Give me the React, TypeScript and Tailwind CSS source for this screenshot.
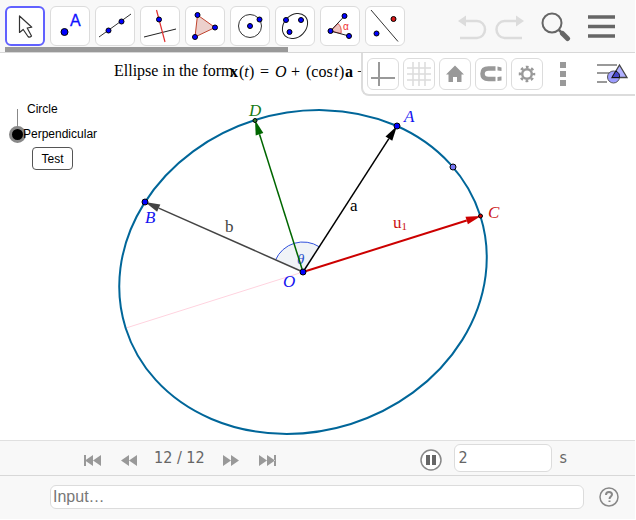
import { useState, type ReactNode } from "react";

const BLUE = "#0000ff";
const serif = "font-['Liberation_Serif',serif]";
const barText = "font-['DejaVu_Sans_Condensed','DejaVu_Sans',sans-serif] text-base text-[#666666]";

function Dot({ x, y, r = 3, fill = BLUE }: { x: number; y: number; r?: number; fill?: string }) {
  return <circle cx={x} cy={y} r={r - 0.5} fill={fill} stroke="#000" strokeWidth="1" />;
}

const tools: { name: string; icon: ReactNode }[] = [
  {
    name: "Move",
    icon: (
      <path
        d="M14.500 10v16.500l3.700-3 4.800 7q1.500 1.500 3.500-.5l-4.300-8 4.600-.8z"
        fill="#fff"
        stroke="#333"
        strokeWidth="1.2"
        strokeLinejoin="round"
      />
    ),
  },
  {
    name: "Point",
    icon: (
      <>
        <Dot x={14.5} y={26} r={4} />
        <text x="20" y="20" fontSize="16" fill="#1010ff" stroke="#1010ff" strokeWidth=".3">A</text>
      </>
    ),
  },
  {
    name: "Line",
    icon: (
      <>
        <path d="M4 31 36 8" stroke="#333" />
        <Dot x={13.5} y={24.5} />
        <Dot x={26.5} y={15.5} />
      </>
    ),
  },
  {
    name: "Perpendicular Line",
    icon: (
      <>
        <path d="m4 31 32-8" stroke="#222" />
        <path d="m16.500 4 8.500 32" stroke="#e03030" strokeWidth="1.2" />
        <Dot x={19} y={13.5} />
      </>
    ),
  },
  {
    name: "Polygon",
    icon: (
      <>
        <path d="M12.500 9 30 21.500 10 31z" fill="#ecd0cc" stroke="#c0442e" />
        <Dot x={12.5} y={9} />
        <Dot x={30} y={21.5} />
        <Dot x={10} y={31} />
      </>
    ),
  },
  {
    name: "Circle with Center",
    icon: (
      <>
        <circle cx="20" cy="20" r="11.5" fill="none" stroke="#333" />
        <Dot x={20} y={20} />
        <Dot x={29.5} y={13.5} />
      </>
    ),
  },
  {
    name: "Ellipse",
    icon: (
      <>
        <ellipse cx="20" cy="20" rx="14" ry="11" transform="rotate(-45 20 20)" fill="none" stroke="#222" />
        <Dot x={11} y={14} />
        <Dot x={26} y={14} />
        <Dot x={14.5} y={26} />
      </>
    ),
  },
  {
    name: "Angle",
    icon: (
      <>
        <path d="M10.500 25 18 17.500Q22 21 21 27.500z" fill="#efc4c0" stroke="#e05050" />
        <path d="M24.500 10 10.500 25 29 30" fill="none" stroke="#222" />
        <text x="23" y="24" fontSize="10" fill="#f03030">α</text>
        <Dot x={24.5} y={10} />
        <Dot x={10.5} y={25} />
        <Dot x={29} y={30} />
      </>
    ),
  },
  {
    name: "Reflect about Line",
    icon: (
      <>
        <path d="m6 4 27 31.500" stroke="#333" />
        <Dot x={28.5} y={13} fill="#d81818" />
        <Dot x={11.5} y={27.5} />
      </>
    ),
  },
];

const viewOptions: { name: string; icon: ReactNode }[] = [
  { name: "Show axes", icon: <path d="M12 4v24M4 20h24" stroke="#999" strokeWidth="2" /> },
  {
    name: "Show grid",
    icon: <path d="M10 4v24M16 4v24M22 4v24M4 10h24M4 16h24M4 22h24" stroke="#dcdcdc" strokeWidth="1.5" />,
  },
  { name: "Standard view", icon: <path d="M16 7.500 25 16.500h-2.500v7.500h-4.500v-5h-4v5h-4.500v-7.500h-2.500z" fill="#999" /> },
  {
    name: "Snap to grid",
    icon: (
      <>
        <path d="M20.500 10.500h-7q-6 0-6 5.200t6 5.200h7" fill="none" stroke="#999" strokeWidth="4.500" />
        <path d="m22.500 8.500 4 1v3.500l-4-.5zM22.500 19l4-.5v4l-4 .5z" fill="#999" />
      </>
    ),
  },
  {
    name: "Settings",
    icon: (
      <g fill="none" stroke="#999">
        <circle cx="16" cy="16" r="4.800" strokeWidth="2.500" />
        <circle cx="16" cy="16" r="7" strokeWidth="2.500" strokeDasharray="2.750 2.748" strokeDashoffset="1.375" />
      </g>
    ),
  },
];

function Toolbar() {
  const [active, setActive] = useState("Move");
  return (
    <header className="flex h-[53px] items-start justify-between border-b border-[#d8d8d8] bg-[#f8f8f8] pl-[5px]">
      <div className="pt-1.5">
        <div className="flex gap-[5px]">
          {tools.map((t) => (
            <button
              key={t.name}
              aria-label={t.name}
              onClick={() => setActive(t.name)}
              className={`flex size-10 items-center justify-center rounded-md bg-white ${
                active === t.name ? "border-2 border-[#6161ff]" : "border border-[#dcdcdc]"
              }`}
            >
              <svg viewBox="0 0 40 40" className="size-10 shrink-0 font-['Liberation_Sans',sans-serif]">{t.icon}</svg>
            </button>
          ))}
        </div>
        <div className="mt-px h-[5px] w-[283px] bg-[#999999]" />
      </div>
      <div className="flex items-center gap-2 pt-3 pr-[18px]">
        <button aria-label="Undo">
          <svg viewBox="0 0 30 30" className="size-[30px]">
            <path d="M8 9h12a8 8.500 0 0 1 0 17H3" fill="none" stroke="#dcdcdc" strokeWidth="2.500" />
            <path d="M1 9 9 3.500v11z" fill="#dcdcdc" />
          </svg>
        </button>
        <button aria-label="Redo">
          <svg viewBox="0 0 30 30" className="size-[30px]">
            <path d="M21 9H9.500a8 8.500 0 0 0 0 17H27" fill="none" stroke="#dcdcdc" strokeWidth="2.500" />
            <path d="M29 9 21 3.500v11z" fill="#dcdcdc" />
          </svg>
        </button>
        <button aria-label="Search" className="ml-2">
          <svg viewBox="0 0 30 30" className="size-[30px]">
            <circle cx="11" cy="11" r="9.500" fill="none" stroke="#666" strokeWidth="2" />
            <path d="m17.500 17.500 4 4" stroke="#666" strokeWidth="2.500" />
            <path d="m21.500 21.500 5 5" stroke="#666" strokeWidth="5" strokeLinecap="round" />
          </svg>
        </button>
        <button aria-label="Menu" className="ml-2">
          <svg viewBox="0 0 30 30" className="size-[30px]">
            <path d="M1 5h27M1 14.500h27M1 24h27" stroke="#666" strokeWidth="3.500" />
          </svg>
        </button>
      </div>
    </header>
  );
}

function StyleBar() {
  return (
    <div className="absolute top-0 right-0 flex h-[43px] w-[274px] items-center rounded-bl-lg border-b-2 border-l-2 border-[#dcdcdc] bg-white pl-1">
      <div className="flex gap-1">
        {viewOptions.map((o) => (
          <button
            key={o.name}
            aria-label={o.name}
            className="flex size-8 items-center justify-center rounded-md border border-[#dcdcdc] bg-white"
          >
            <svg viewBox="0 0 32 32" className="size-8 shrink-0">{o.icon}</svg>
          </button>
        ))}
      </div>
      <button aria-label="More" className="ml-4">
        <svg viewBox="0 0 8 26" className="h-[26px] w-2">
          <path d="M1 1h6v6H1zM1 10h6v6H1zM1 19h6v6H1z" fill="#999" />
        </svg>
      </button>
      <button aria-label="Graphics style" className="ml-[29px]">
        <svg viewBox="0 0 32 26" className="h-[26px] w-8">
          <path d="M1 4h20M1 12h13M1 21h10" stroke="#999" strokeWidth="2" />
          <circle cx="17.500" cy="16" r="6" fill="#9c9cff" stroke="#555" />
          <path d="M23.500 4 31 16.500H16z" fill="#9c9cff" fillOpacity=".8" stroke="#444" strokeWidth="1.300" />
          <path d="M20 9.800 16 16.500h7.500a6 6 0 0 0-3.500-6.300z" fill="#4646c8" stroke="#111" />
        </svg>
      </button>
    </div>
  );
}

function Vector({ x, y, color, width = 1.5 }: { x: number; y: number; color: string; width?: number }) {
  const ox = 303;
  const oy = 272;
  const len = Math.hypot(x - ox, y - oy);
  const ux = (x - ox) / len;
  const uy = (y - oy) / len;
  const bx = x - ux * 15;
  const by = y - uy * 15;
  return (
    <>
      <path d={`M${ox} ${oy}L${bx} ${by}`} stroke={color} strokeWidth={width} />
      <path d={`M${x} ${y}L${bx - uy * 4} ${by + ux * 4}L${bx + uy * 4} ${by - ux * 4}z`} fill={color} />
    </>
  );
}

function Construction() {
  return (
    <svg viewBox="0 53 636 387" className={`block h-[387px] w-[636px] ${serif}`} fontSize="17">
      <path d="M303 272 126 328" stroke="#ffd3df" />
      <path d="M303 272 275.500 260A30 30 0 0 1 319.300 246.800z" fill="#f0f3f7" />
      <path d="M275.500 260A30 30 0 0 1 319.300 246.800" fill="none" stroke="#3050dd" />
      <text x="297" y="264" fontStyle="italic" fontSize="15" fill="#2a52cc">θ</text>
      <ellipse
        cx="303"
        cy="272"
        rx="186"
        ry="159.300"
        transform="rotate(-17.500 303 272)"
        fill="none"
        stroke="#006699"
        strokeWidth="2"
      />
      <Vector x={145} y={202} color="#444444" />
      <Vector x={255} y={120} color="#006600" />
      <Vector x={397} y={126} color="#000000" />
      <Vector x={481} y={216} color="#cc0000" width={2} />
      <Dot x={303} y={272} r={3.5} />
      <Dot x={145} y={202} r={3.5} />
      <Dot x={397} y={126} r={3.5} />
      <Dot x={453} y={167} r={3.5} fill="#7777f4" />
      <Dot x={255} y={120.5} r={2.5} fill="#2c7a2c" />
      <Dot x={480.5} y={216} r={2.5} fill="#cc0000" />
      <g fontStyle="italic" fill="#1414f0">
        <text x="404" y="122">A</text>
        <text x="145" y="223">B</text>
        <text x="283" y="287">O</text>
        <text x="249" y="116" fill="#167a16">D</text>
        <text x="488" y="218" fill="#cc1414">C</text>
      </g>
      <text x="350" y="211">a</text>
      <text x="225" y="232" fill="#444">b</text>
      <text x="393" y="228" fill="#cc1414">
        u<tspan dy="2" fontSize="11">1</tspan>
      </text>
      <text x="114" y="76" fontSize="16">Ellipse in the form</text>
      <g fontSize="16">
        <text x="230" y="77" fontWeight="bold">x</text>
        <text x="239" y="77">(<tspan fontStyle="italic">t</tspan></text>
        <text x="249" y="77">)</text>
        <text x="260" y="77">=</text>
        <text x="275" y="77" fontStyle="italic">O</text>
        <text x="291" y="77">+</text>
        <text x="306" y="77">(cos</text>
        <text x="334" y="77" fontStyle="italic">t</text>
        <text x="339" y="77">)</text>
        <text x="345" y="77" fontWeight="bold">a</text>
        <text x="357" y="77">−</text>
      </g>
    </svg>
  );
}

function ModeSlider() {
  const [value, setValue] = useState(1);
  return (
    <div className="font-['Liberation_Sans',sans-serif] text-xs leading-4 text-black">
      <div className="absolute top-14 left-[17px] h-[25px] w-px bg-[#888888]" />
      <span className="absolute top-12 left-[27px]">Circle</span>
      <input
        id="mode"
        type="range"
        min={0}
        max={1}
        step={1}
        value={value}
        onChange={(e) => setValue(Number(e.target.value))}
        className="absolute top-[47px] left-[9px] h-[43px] w-[17px] appearance-none bg-transparent [writing-mode:vertical-lr] [&::-webkit-slider-thumb]:size-[17px] [&::-webkit-slider-thumb]:appearance-none [&::-webkit-slider-thumb]:rounded-full [&::-webkit-slider-thumb]:border-3 [&::-webkit-slider-thumb]:border-[#888888] [&::-webkit-slider-thumb]:bg-black"
      />
      <label htmlFor="mode" className="absolute top-[73px] left-[23px]">Perpendicular</label>
      <button className="absolute top-[94px] left-8 h-[23px] w-[41px] rounded-sm border border-[#555555] bg-white">
        Test
      </button>
    </div>
  );
}

const back = "M9 0v11L1 5.500zM17 0v11L9 5.500z";
const forward = "M1 0v11l8-5.500zM9 0v11l8-5.500z";

function StepButton({ name, d, className = "" }: { name: string; d: string; className?: string }) {
  return (
    <button aria-label={name} className={className}>
      <svg viewBox="0 0 18 11" className="mt-1 h-[11px] w-[18px]">
        <path d={d} fill="#999" />
      </svg>
    </button>
  );
}

function NavigationBar() {
  const [seconds, setSeconds] = useState("2");
  return (
    <nav className={`flex h-[35px] items-center border-t border-[#e0e0e0] bg-[#f8f8f8] pr-17 pl-21 ${barText}`}>
      <StepButton name="First step" d={`M0 0h2v11H0z${back}`} />
      <StepButton name="Previous step" d={back} className="ml-[18px]" />
      <span className="ml-4 w-[52px] whitespace-nowrap">12 / 12</span>
      <StepButton name="Next step" d={forward} className="ml-4" />
      <StepButton name="Last step" d={`M16 0h2v11h-2z${forward}`} className="ml-[18px]" />
      <button aria-label="Pause" className="mt-1 ml-auto">
        <svg viewBox="0 0 22 22" className="size-[22px]">
          <circle cx="11" cy="11" r="10" fill="#fff" stroke="#888" strokeWidth="1.500" />
          <path d="M6 6h4v10H6zM12 6h4v10h-4z" fill="#666" />
        </svg>
      </button>
      <input
        id="seconds"
        value={seconds}
        onChange={(e) => setSeconds(e.target.value)}
        className="ml-3 h-7 w-[98px] rounded-md border border-[#dcdcdc] bg-white pr-1 pb-0.5 pl-1 outline-none"
      />
      <label htmlFor="seconds" className="ml-2">s</label>
    </nav>
  );
}

function InputBar() {
  return (
    <footer className="flex h-11 items-center border-t border-[#d8d8d8] bg-[#f8f8f8] pr-4 pb-px pl-[50px]">
      <input
        aria-label="Input"
        placeholder="Input…"
        className="h-6 min-w-0 flex-1 rounded-md border border-[#dcdcdc] bg-white px-0.5 font-['Liberation_Sans',sans-serif] text-base outline-none placeholder:text-[#777777]"
      />
      <button aria-label="Help" className="ml-[15px]">
        <svg viewBox="0 0 20 20" className="size-5">
          <circle cx="10" cy="10" r="9" fill="none" stroke="#888" strokeWidth="1.500" />
          <path d="M7 8q0-3 3-3t3 2.500c0 2-2.500 2-2.500 4.500M10.500 13.500V15" fill="none" stroke="#888" strokeWidth="2" />
        </svg>
      </button>
    </footer>
  );
}

export default function App() {
  return (
    <div className="mr-px bg-white">
      <Toolbar />
      <main className="relative overflow-hidden">
        <Construction />
        <ModeSlider />
        <StyleBar />
      </main>
      <NavigationBar />
      <InputBar />
    </div>
  );
}
